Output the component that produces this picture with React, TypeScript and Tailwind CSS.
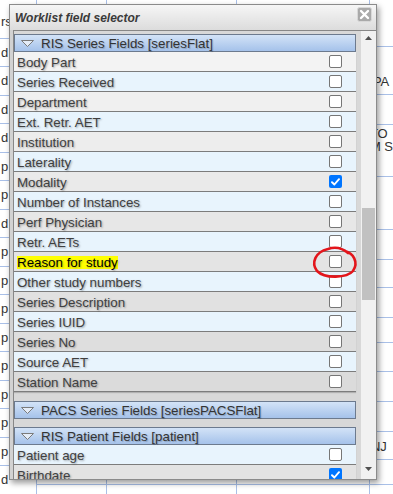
import React from "react";

type Field = { label: string; bg: string; checked?: boolean; mark?: boolean };

const seriesFields: Field[] = [
  { label: "Body Part", bg: "bg-[#f3f3f3]" },
  { label: "Series Received", bg: "bg-[#e8f4fd]" },
  { label: "Department", bg: "bg-[#f0f0f0]" },
  { label: "Ext. Retr. AET", bg: "bg-[#e8f4fd]" },
  { label: "Institution", bg: "bg-[#ededed]" },
  { label: "Laterality", bg: "bg-[#e8f4fd]" },
  { label: "Modality", bg: "bg-[#eaeaea]", checked: true },
  { label: "Number of Instances", bg: "bg-[#e8f4fd]" },
  { label: "Perf Physician", bg: "bg-[#e7e7e7]" },
  { label: "Retr. AETs", bg: "bg-[#e8f4fd]" },
  { label: "Reason for study", bg: "bg-[#e4e4e4]", mark: true },
  { label: "Other study numbers", bg: "bg-[#e8f4fd]" },
  { label: "Series Description", bg: "bg-[#e1e1e1]" },
  { label: "Series IUID", bg: "bg-[#e8f4fd]" },
  { label: "Series No", bg: "bg-[#dedede]" },
  { label: "Source AET", bg: "bg-[#e8f4fd]" },
  { label: "Station Name", bg: "bg-[#dbdbdb]" },
];

const patientFields: Field[] = [
  { label: "Patient age", bg: "bg-[#e8f4fd]" },
  { label: "Birthdate", bg: "bg-[#e3e3e3]", checked: true },
];

// letters peeking out left of the dialog
const leftCells = ["d", "d", "d", "d", "p", "p", "d", "p", "p", "p", "p", "p", "p", "p", "p", "d"];

function Checkbox({ checked }: { checked?: boolean }) {
  if (checked) {
    return (
      <div className="flex h-[13px] w-[13px] items-center justify-center rounded-[2px] bg-[#0075ff]">
        <svg width="9" height="8" viewBox="0 0 9 8">
          <path d="M1 4.2 L3.4 6.5 L8 1.2" fill="none" stroke="white" strokeWidth="1.9" strokeLinecap="round" strokeLinejoin="round" />
        </svg>
      </div>
    );
  }
  return <div className="h-[13px] w-[13px] rounded-[2px] border border-[#767676] bg-white" />;
}

function FieldRow({ field }: { field: Field }) {
  return (
    <div
      className={`flex h-[20px] items-center justify-between border-b border-[#7c7c7c] pl-[3px] pr-[14px] shadow-[0_1px_1px_rgba(0,0,0,0.18)] ${field.bg}`}
    >
      <span
        className={
          field.mark
            ? "mt-[2px] bg-[#ffff00] text-black [text-shadow:1px_1px_2px_rgba(0,0,0,0.3)]"
            : "mt-[2px] text-[#404040] [text-shadow:1px_1px_2px_rgba(0,0,0,0.35)]"
        }
      >
        {field.label}
      </span>
      <Checkbox checked={field.checked} />
    </div>
  );
}

function SectionHeader({ title }: { title: string }) {
  return (
    <div className="flex h-[18px] items-center border border-[#6c7a8e] bg-gradient-to-b from-[#d3e3f7] to-[#a5c2ea] text-[#333] [text-shadow:1px_1px_1px_rgba(0,0,0,0.2)]">
      <svg className="ml-[6px]" width="13" height="7" viewBox="0 0 13 7">
        <path d="M0.5 0.5 H12.5 L6.5 6.5 Z" fill="#e4ecf7" stroke="#7b7b7b" strokeWidth="1" strokeLinejoin="round" />
      </svg>
      <span className="ml-[7px] mt-[1px]">{title}</span>
    </div>
  );
}

export default function App() {
  return (
    <div className="relative h-[494px] w-[393px] overflow-hidden bg-white font-['Liberation_Sans',Arial,sans-serif] text-[13.33px] leading-none">
      {/* worklist table behind the dialog */}
      <div className="flex h-full text-[13px] text-[#333]">
        <div className="flex w-[37px] flex-col border-r border-[#a9c0e8]">
          <div className="flex h-[38.5px] shrink-0 items-center border-b border-[#a9c0e8] pl-[1px] pt-[6px]">rs</div>
          {leftCells.map((c, i) => (
            <div key={i} className="flex h-[28.5px] shrink-0 items-center border-b border-[#a9c0e8] pl-[1px]">
              {c}
            </div>
          ))}
        </div>
        <div className="w-[71px] border-r border-[#a9c0e8]">
          <div className="h-[485px] border-b border-[#a9c0e8]" />
        </div>
        <div className="w-[132px] border-r border-[#a9c0e8]">
          <div className="h-[485px] border-b border-[#a9c0e8]" />
        </div>
        <div className="w-[135px] border-r border-[#a9c0e8]">
          <div className="h-[485px] border-b border-[#a9c0e8]" />
        </div>
        <div className="flex flex-1 flex-col whitespace-nowrap">
          <div className="h-[47px] shrink-0 border-b border-[#a9c0e8]" />
          <div className="h-[48px] shrink-0 border-b border-[#a9c0e8] pl-[3px] pt-[28px]">PA</div>
          <div className="h-[30px] shrink-0 border-b border-[#a9c0e8]" />
          <div className="flex h-[52px] shrink-0 flex-col border-b border-[#a9c0e8] pt-[2px]">
            <div className="h-[12px]">TO</div>
            <div className="mt-[1px] h-[12px]">M S</div>
          </div>
          <div className="h-[53px] shrink-0 border-b border-[#a9c0e8]" />
          <div className="h-[30px] shrink-0 border-b border-[#a9c0e8]" />
          <div className="h-[28px] shrink-0 border-b border-[#a9c0e8]" />
          <div className="h-[30px] shrink-0 border-b border-[#a9c0e8]" />
          <div className="h-[25px] shrink-0 border-b border-[#a9c0e8]" />
          <div className="h-[29px] shrink-0 border-b border-[#a9c0e8]" />
          <div className="h-[30px] shrink-0 border-b border-[#a9c0e8]" />
          <div className="h-[30px] shrink-0 border-b border-[#a9c0e8]" />
          <div className="h-[28px] shrink-0 border-b border-[#a9c0e8] pl-[1px] pt-[8px]">NJ</div>
          <div className="h-[25px] shrink-0 border-b border-[#a9c0e8]" />
        </div>
      </div>

      {/* field selector dialog */}
      <div className="absolute left-[9px] top-[4px] flex h-[476px] w-[368px] flex-col border border-[#8b8b8b] bg-[#d2d2d2] shadow-[2px_3px_6px_rgba(0,0,0,0.4)]">
        <div className="flex h-[25px] shrink-0 items-start justify-between bg-gradient-to-b from-[#f6f6f6] to-[#dcdcdc]">
          <span className="pl-[5px] pt-[7px] text-[12px] font-bold italic text-[#3a3a3a]">Worklist field selector</span>
          <svg className="mr-[4px] mt-[2px]" width="15" height="15" viewBox="0 0 15 15">
            <rect x="0.5" y="0.5" width="14" height="14" rx="2" fill="#a9a9a9" stroke="#d8d8d8" />
            <path d="M4 4 L11 11 M11 4 L4 11" stroke="white" strokeWidth="2.4" strokeLinecap="round" />
          </svg>
        </div>
        <div className="ml-[3px] flex min-h-0 flex-1 border-l border-t border-[#878787]">
          <div className="min-w-0 flex-1 overflow-hidden bg-[#d8d8d8] pr-[5px] pt-[3px]">
            <SectionHeader title="RIS Series Fields [seriesFlat]" />
            {seriesFields.map((f) => (
              <FieldRow key={f.label} field={f} />
            ))}
            <div className="mt-[9px]">
              <SectionHeader title="PACS Series Fields [seriesPACSFlat]" />
            </div>
            <div className="mt-[8px]">
              <SectionHeader title="RIS Patient Fields [patient]" />
            </div>
            {patientFields.map((f) => (
              <FieldRow key={f.label} field={f} />
            ))}
          </div>
          <div className="flex w-[15px] shrink-0 flex-col bg-[#f1f1f1]">
            <div className="flex h-[14px] shrink-0 items-center justify-center">
              <svg width="7" height="4" viewBox="0 0 7 4">
                <path d="M0 4 L3.5 0 L7 4 Z" fill="#505050" />
              </svg>
            </div>
            <div className="h-[163px] shrink-0" />
            <div className="mx-[1px] h-[92px] shrink-0 bg-[#c1c1c1]" />
            <div className="flex-1" />
            <div className="flex h-[16px] shrink-0 items-start justify-center pt-[4px]">
              <svg width="7" height="4" viewBox="0 0 7 4">
                <path d="M0 0 L7 0 L3.5 4 Z" fill="#505050" />
              </svg>
            </div>
          </div>
        </div>
      </div>

      {/* red marker circle */}
      <svg className="absolute left-[309px] top-[243px]" width="52" height="38" viewBox="0 0 52 38">
        <path
          d="M36 8 C44 10, 50 19, 44 28 C38 35, 16 36, 8 28 C2 20, 6 9, 19 6 C25 4, 32 4, 39 10"
          fill="none"
          stroke="#e3151b"
          strokeWidth="2.6"
          strokeLinecap="round"
        />
      </svg>
    </div>
  );
}
